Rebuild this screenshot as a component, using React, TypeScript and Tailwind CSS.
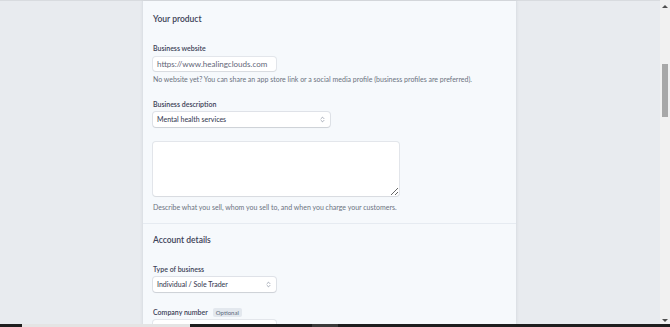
import { ChevronsUpDown } from "lucide-react";

function Label({ children, className = "" }: { children: React.ReactNode; className?: string }) {
  return (
    <div className={`flex items-center gap-[5px] h-[10px] text-[7px] font-semibold text-[#3c4257] ${className}`}>
      {children}
    </div>
  );
}

function Select({ value, width }: { value: string; width: string }) {
  return (
    <div
      className={`${width} h-[15px] mt-[3px] flex items-center justify-between px-[4px] bg-white rounded-[3px] shadow-[0_0_0_1px_rgba(60,66,87,0.12),0_1px_1px_rgba(0,0,0,0.08)] text-[7px] font-medium text-[#3c4257]`}
    >
      <span>{value}</span>
      <ChevronsUpDown className="w-[7px] h-[7px] text-[#697386]" strokeWidth={2} />
    </div>
  );
}

export default function App() {
  return (
    <div className="w-[670px] h-[327px] flex flex-col bg-[#e8ebef] overflow-hidden font-['Lato',sans-serif]">
      <div className="flex flex-1 min-h-0">
        <div className="flex-1 flex flex-col">
          <div className="h-[2px] bg-[#eef0f2]" />
          <div className="flex flex-1 border-t border-[#d8dbdf]">
            <div className="w-[142px]" />
            {/* Main panel */}
            <div className="w-[375px] bg-[#f6f9fc] border-x border-[#dde1e6] shadow-[0_0_3px_rgba(0,0,0,0.06)]">
              <div className="px-[10px] pt-[12px]">
                <div className="h-[12px] flex items-center text-[8.5px] font-semibold text-[#3c4257]">Your product</div>

                <Label className="mt-[18px]">Business website</Label>
                <div className="w-[123px] h-[14px] mt-[4px] flex items-center px-[4px] bg-white rounded-[3px] shadow-[0_0_0_1px_rgba(60,66,87,0.1),0_1px_1px_rgba(0,0,0,0.05)] text-[8px] text-[#5f6677]">
                  https://www.healingclouds.com
                </div>
                <div className="h-[9px] mt-[4px] flex items-center text-[7px] text-[#6b7280]">
                  No website yet? You can share an app store link or a social media profile (business profiles are preferred).
                </div>

                <Label className="mt-[15px]">Business description</Label>
                <Select value="Mental health services" width="w-[177px]" />

                <textarea
                  className="block w-[246px] h-[54px] mt-[15px] bg-white rounded-[3px] shadow-[0_0_0_1px_rgba(60,66,87,0.1),0_1px_1px_rgba(0,0,0,0.05)] outline-none"
                  readOnly
                />
                <div className="h-[9px] mt-[7px] flex items-center text-[7px] text-[#6b7280]">
                  Describe what you sell, whom you sell to, and when you charge your customers.
                </div>
              </div>

              <div className="h-px bg-[#e6ebf1] mt-[11px]" />

              <div className="px-[10px] pt-[10px]">
                <div className="h-[12px] flex items-center text-[8.5px] font-semibold text-[#3c4257]">Account details</div>

                <Label className="mt-[18px]">Type of business</Label>
                <Select value="Individual / Sole Trader" width="w-[123px]" />

                <Label className="mt-[15px]">
                  Company number
                  <span className="px-[3px] h-[9px] flex items-center rounded-[2px] bg-[#e3e8ee] text-[6px] font-medium text-[#697386]">
                    Optional
                  </span>
                </Label>
                <div className="w-[123px] h-[14px] mt-[3px] bg-white rounded-[3px] shadow-[0_0_0_1px_rgba(60,66,87,0.1)]" />
              </div>
            </div>
            <div className="flex-1" />
          </div>
        </div>
        {/* Scrollbar */}
        <div className="w-[10px] bg-[#f1f1f1] flex flex-col items-center">
          <div className="mt-[5px] w-0 h-0 border-x-[3px] border-x-transparent border-b-[3px] border-b-[#505050]" />
          <div className="mt-[56px] w-[6px] h-[53px] bg-[#a8a8a8]" />
          <div className="flex-1" />
          <div className="mb-[2px] w-0 h-0 border-x-[3px] border-x-transparent border-t-[3px] border-t-[#505050]" />
        </div>
      </div>
      {/* Bottom strip */}
      <div className="h-[3px] flex">
        <div className="w-[22px] bg-[#1e1e1e]" />
        <div className="w-[168px] bg-[#e4e4e4]" />
        <div className="w-[122px] bg-[#1e1e1e]" />
        <div className="w-[26px] bg-[#3a3a3a]" />
        <div className="flex-1 bg-[#1e1e1e]" />
      </div>
    </div>
  );
}
